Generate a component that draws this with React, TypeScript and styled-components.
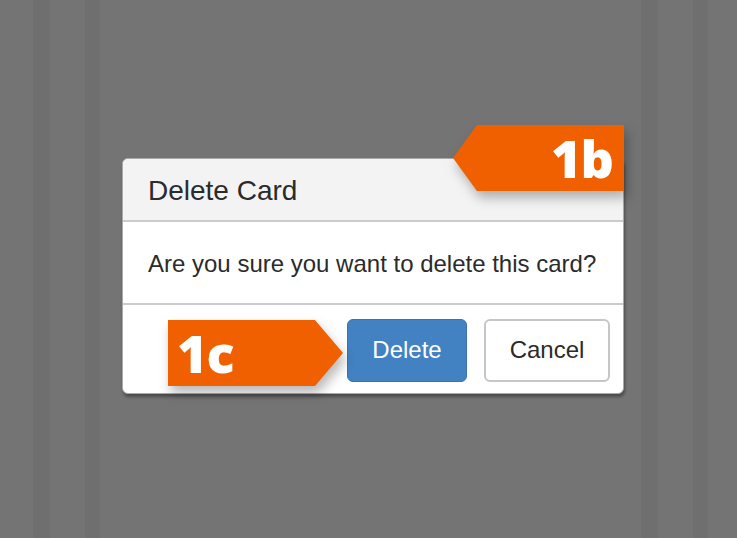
import React from "react";
import styled, { createGlobalStyle } from "styled-components";

const Global = createGlobalStyle`
  html, body { margin: 0; padding: 0; }
  body {
    width: 737px;
    height: 538px;
    overflow: hidden;
    font-family: "Liberation Sans", Arial, sans-serif;
    background-color: #747474;
    background-image: linear-gradient(
      to right,
      transparent 0 33px,
      #6f6f6f 33px 50px,
      transparent 50px 85px,
      #6f6f6f 85px 100px,
      transparent 100px 641px,
      #6f6f6f 641px 658px,
      transparent 658px 693px,
      #6f6f6f 693px 708px,
      transparent 708px
    );
  }
`;

const Page = styled.div`
  position: relative;
  width: 737px;
  height: 538px;
  box-sizing: border-box;
  padding: 158px 0 0 122px;
`;

const Dialog = styled.div`
  position: relative;
  width: 502px;
  box-sizing: border-box;
  border: 1.5px solid #a9a9a9;
  border-radius: 6px;
  background: #ffffff;
  box-shadow: 1px 3px 3px rgba(0, 0, 0, 0.35);
  display: flex;
  flex-direction: column;
`;

const Header = styled.div`
  height: 63px;
  box-sizing: border-box;
  padding: 0 0 0 25px;
  display: flex;
  align-items: center;
  background: #f3f3f3;
  border-bottom: 2px solid #cbcbcb;
  border-radius: 5px 5px 0 0;
`;

const Title = styled.h2`
  margin: 0;
  padding-top: 2px;
  font-size: 28px;
  font-weight: 400;
  color: #2b2b2b;
`;

const Body = styled.div`
  height: 83px;
  box-sizing: border-box;
  padding: 0 0 0 25px;
  display: flex;
  align-items: center;
  border-bottom: 2px solid #cbcbcb;
`;

const Message = styled.p`
  margin: 0;
  padding-top: 2px;
  font-size: 24px;
  color: #2b2b2b;
`;

const Footer = styled.div`
  height: 88px;
  box-sizing: border-box;
  padding: 2px 13px 0 0;
  display: flex;
  align-items: center;
  justify-content: flex-end;
  gap: 17px;
`;

const Button = styled.button<{ $primary?: boolean }>`
  height: 63px;
  width: ${(p) => (p.$primary ? "120px" : "126px")};
  box-sizing: border-box;
  border-radius: 6px;
  font-family: "Liberation Sans", Arial, sans-serif;
  font-size: 24px;
  cursor: pointer;
  padding: 0;
  border: ${(p) => (p.$primary ? "1.5px solid #3a73ad" : "2px solid #c6c6c6")};
  background: ${(p) => (p.$primary ? "#4282c2" : "#ffffff")};
  color: ${(p) => (p.$primary ? "#ffffff" : "#2b2b2b")};
`;

const BadgeWrap = styled.div<{ $x: number; $y: number; $w: number }>`
  position: absolute;
  left: ${(p) => p.$x}px;
  top: ${(p) => p.$y}px;
  width: ${(p) => p.$w}px;
  height: 66px;
  filter: drop-shadow(3px 7px 6px rgba(0, 0, 0, 0.28));
`;

const Badge = styled.div<{ $dir: "left" | "right" }>`
  width: 100%;
  height: 66px;
  box-sizing: border-box;
  background: #f06000;
  color: #ffffff;
  font-family: "Open Sans", "Noto Sans", sans-serif;
  font-weight: 800;
  font-size: 52px;
  line-height: 66px;
  letter-spacing: -1px;
  display: flex;
  align-items: center;
  justify-content: ${(p) => (p.$dir === "left" ? "flex-end" : "flex-start")};
  padding: ${(p) => (p.$dir === "left" ? "0 11px 0 0" : "0 0 0 9px")};
  clip-path: ${(p) =>
    p.$dir === "left"
      ? "polygon(14% 0, 100% 0, 100% 100%, 14% 100%, 0 50%)"
      : "polygon(0 0, 84% 0, 100% 50%, 84% 100%, 0 100%)"};
`;

export default function App() {
  return (
    <>
      <Global />
      <Page>
        <Dialog>
          <Header>
            <Title>Delete Card</Title>
          </Header>
          <Body>
            <Message>Are you sure you want to delete this card?</Message>
          </Body>
          <Footer>
            <Button $primary>Delete</Button>
            <Button>Cancel</Button>
          </Footer>
        </Dialog>
        <BadgeWrap $x={453} $y={125} $w={171}>
          <Badge $dir="left">1b</Badge>
        </BadgeWrap>
        <BadgeWrap $x={168} $y={320} $w={175}>
          <Badge $dir="right">1c</Badge>
        </BadgeWrap>
      </Page>
    </>
  );
}
